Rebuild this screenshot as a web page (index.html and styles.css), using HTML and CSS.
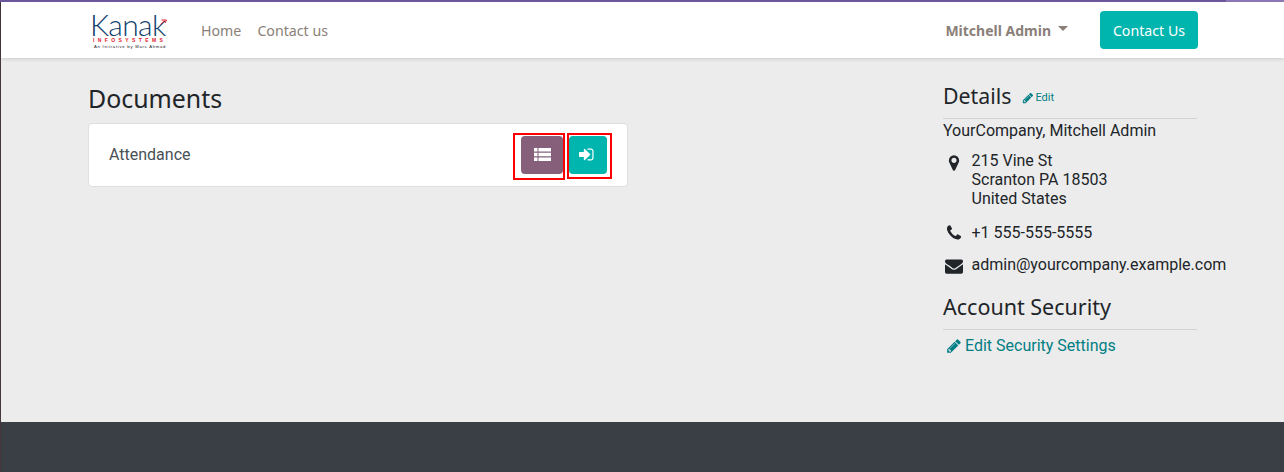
FILE: index.html
```html
<!DOCTYPE html>
<html lang="en">
<head>
<meta charset="utf-8">
<title>Documents</title>
<link rel="stylesheet" href="styles.css">
</head>
<body>
<div class="page">
  <div class="topline"></div>
  <header class="navbar">
    <div class="brand">
      <div class="brand-name">Kanak<svg class="brand-arrow" viewBox="0 0 7 6" width="7" height="6"><path d="M.5 5.500 5 1.500M1.500 1h5L5 4" fill="none" stroke="#e0202c" stroke-width="1"/></svg></div>
      <div class="brand-sub">INFOSYSTEMS</div>
      <div class="brand-tag">An Initiative by Mars Ahmad</div>
    </div>
    <nav class="nav-links">
      <a class="nav-link">Home</a>
      <a class="nav-link">Contact us</a>
    </nav>
    <div class="nav-right">
      <span class="user">Mitchell Admin</span>
      <span class="caret"></span>
      <a class="contact-btn">Contact Us</a>
    </div>
  </header>
  <main class="content">
    <section class="docs">
      <h1 class="docs-title">Documents</h1>
      <div class="card">
        <span class="card-label">Attendance</span>
        <div class="card-actions">
          <span class="outline outline-list">
            <span class="action action-list">
              <svg viewBox="0 0 17 13" width="17" height="13"><path fill="#fff" d="M0 0h3.500v3.400H0zM4.500 0H17v3.400H4.500zM0 4.800h3.500v3.400H0zM4.500 4.800H17v3.400H4.500zM0 9.600h3.500V13H0zM4.500 9.600H17V13H4.500z"/></svg>
            </span>
          </span>
          <span class="outline outline-sign">
            <span class="action action-sign">
              <svg viewBox="0 0 1792 1792" width="17" height="17"><path fill="#fff" d="M1184 896q0 26-19 45l-544 544q-19 19-45 19t-45-19-19-45v-288h-448q-26 0-45-19t-19-45v-384q0-26 19-45t45-19h448v-288q0-26 19-45t45-19 45 19l544 544q19 19 19 45zm352-352v704q0 119-84.500 203.500t-203.500 84.500h-320q-13 0-22.500-9.500t-9.500-22.500q0-4-1-20t-.5-26.500 3-23.500 10-19.500 20.500-6.500h320q66 0 113-47t47-113v-704q0-66-47-113t-113-47h-312l-11.500-1-11.500-3-8-5.500-7-9-2-13.500q0-4-1-20t-.5-26.500 3-23.500 10-19.500 20.500-6.500h320q119 0 203.500 84.500t84.500 203.500z"/></svg>
            </span>
          </span>
        </div>
      </div>
    </section>
    <aside class="side">
      <div class="side-head">
        <h2 class="side-title">Details</h2>
        <a class="edit-link"><svg class="pencil" viewBox="0 0 1792 1792" width="12" height="12"><path fill="currentColor" d="M491 1536l91-91-235-235-91 91v107h128v128h107zm523-928q0-22-22-22-10 0-17 7l-542 542q-7 7-7 17 0 22 22 22 10 0 17-7l542-542q7-7 7-17zm-54-192l416 416-832 832h-416v-416zm683 96q0 53-37 90l-166 166-416-416 166-165q36-38 90-38 53 0 91 38l235 234q37 39 37 91z"/></svg>Edit</a>
      </div>
      <div class="company">YourCompany, Mitchell Admin</div>
      <div class="info-row info-address">
        <svg class="info-icon" viewBox="0 0 1792 1792" width="18" height="18"><path fill="#212529" d="M1152 640q0-106-75-181t-181-75-181 75-75 181 75 181 181 75 181-75 75-181zm256 0q0 109-33 179l-364 774q-16 33-47.500 52t-67.500 19-67.500-19-46.500-52l-365-774q-33-70-33-179 0-212 150-362t362-150 362 150 150 362z"/></svg>
        <span class="info-text">215 Vine St<br>Scranton PA 18503<br>United States</span>
      </div>
      <div class="info-row info-phone">
        <svg class="info-icon" viewBox="0 0 1792 1792" width="18" height="18"><path fill="#212529" d="M1600 1240q0 27-10 70.500t-21 68.500q-21 50-122 106-94 51-186 51-27 0-53-3.500t-57.500-12.500-47-14.500-55.500-20.500-49-18q-98-35-175-83-127-79-264-216t-216-264q-48-77-83-175-3-9-18-49t-20.500-55.500-14.500-47-12.500-57.500-3.500-53q0-92 51-186 56-101 106-122 25-11 68.500-21t70.500-10q14 0 21 3 18 6 53 76 11 19 30 54t35 63.500 31 53.500q3 4 17.500 25t21.500 35.500 7 28.500q0 20-28.500 50t-62 55-62 53-28.500 46q0 9 5 22.500t8.500 20.500 14 24 11.500 19q76 137 174 235t235 174q2 1 19 11.500t24 14 20.500 8.500 22.500 5q18 0 46-28.500t53-62 55-62 50-28.500q14 0 28.500 7t35.500 21.500 25 17.500q25 15 53.500 31t63.500 35 54 30q70 35 76 53 3 7 3 21z"/></svg>
        <span class="info-text">+1 555-555-5555</span>
      </div>
      <div class="info-row info-mail">
        <svg class="info-icon" viewBox="0 0 1792 1792" width="18" height="18"><path fill="#212529" d="M1792 710v794q0 66-47 113t-113 47h-1472q-66 0-113-47t-47-113v-794q44 49 101 87 362 246 497 345 57 42 92.500 65.500t94.500 48 110 24.500h2q51 0 110-24.500t94.500-48 92.500-65.500q170-123 498-345 57-39 100-87zm0-294q0 79-49 151t-122 123q-376 261-468 325-10 7-42.500 30.500t-54 38-52 32.500-57.500 27-50 9h-2q-23 0-50-9t-57.500-27-52-32.500-54-38-42.500-30.500q-91-64-262-182.500t-205-142.500q-62-42-117-115.500t-55-136.500q0-78 41.500-130t118.500-52h1472q65 0 112.500 47t47.500 113z"/></svg>
        <span class="info-text">admin@yourcompany.example.com</span>
      </div>
      <h2 class="side-title security-title">Account Security</h2>
      <a class="security-link"><svg class="pencil-lg" viewBox="0 0 1792 1792" width="16" height="16"><path fill="currentColor" d="M491 1536l91-91-235-235-91 91v107h128v128h107zm523-928q0-22-22-22-10 0-17 7l-542 542q-7 7-7 17 0 22 22 22 10 0 17-7l542-542q7-7 7-17zm-54-192l416 416-832 832h-416v-416zm683 96q0 53-37 90l-166 166-416-416 166-165q36-38 90-38 53 0 91 38l235 234q37 39 37 91z"/></svg>Edit Security Settings</a>
    </aside>
  </main>
  <footer class="footer"></footer>
</div>
</body>
</html>
```
FILE: styles.css
```css
* { box-sizing: border-box; }
html, body { margin: 0; padding: 0; height: 100%; overflow: hidden; }
body { background: #ececec; font-family: Roboto, sans-serif; color: #212529; font-size: 16px; }
.page { height: 472px; display: flex; flex-direction: column; border-left: 1px solid #46363e; }
.topline { height: 2px; flex: none; margin-left: -1px; background: linear-gradient(to right, #6a5699 1226px, #8b78b4 1226px); position: relative; z-index: 1; }
.navbar {
  height: 56px; flex: none; background: #fff;
  display: flex; align-items: center; padding: 0 86px 0 89px;
  box-shadow: 0 1px 4px rgba(0,0,0,.14); position: relative;
}
.brand { width: 78px; color: #12406b; }
.brand-name { font: 300 30px/24px Lato, sans-serif; letter-spacing: -.6px; height: 24px; position: relative; }
.brand-arrow { position: absolute; left: 70px; top: 7px; }
.brand-sub { font: 700 5px/5px "Liberation Sans", sans-serif; color: #e0202c; letter-spacing: 3.400px; margin: 2px 0 0 3px; white-space: nowrap; }
.brand-tag { font: 4.200px/5px "Liberation Sans", sans-serif; color: #222; letter-spacing: .75px; white-space: nowrap; margin: 1px 0 0 4px; }
.nav-links { display: flex; gap: 16px; margin-left: 33px; margin-top: 1px; }
.nav-link { font: 14.200px/20px "Noto Sans", sans-serif; color: #8a8079; }
.nav-right { margin-left: auto; display: flex; align-items: center; }
.user { font: 700 14px/20px "Noto Sans", sans-serif; color: #8a8079; margin: 1px 0 0 0; }
.caret { width: 0; height: 0; border: 5px solid transparent; border-top-color: #8a8079; border-bottom: 0; margin: 0 0 3px 7px; }
.contact-btn {
  margin-left: 32px; width: 98px; height: 38px; background: #00b5ad; color: #fff; border-radius: 4px;
  font: 14.200px/39px "Noto Sans", sans-serif; text-align: center;
}
.content { flex: 1; display: flex; padding-left: 87px; }
.docs { width: 540px; }
.docs-title { font: 400 24.900px/32px "Noto Sans", sans-serif; margin: 24px 0 9px; color: #212529; }
.card {
  height: 64px; background: #fff; border: 1px solid #dfdfdf; border-radius: 4px;
  display: flex; align-items: center; justify-content: space-between; padding: 0 15px 0 20px;
}
.card-label { font: 16px/24px Roboto, sans-serif; color: #495057; }
.card-actions { display: flex; margin-top: 2px; }
.outline { border: 2px solid #f00; display: flex; }
.outline-list { width: 52px; height: 47px; padding: 1px 0 0 6px; }
.outline-sign { width: 45px; height: 46px; margin-left: 2px; padding-top: 1px; }
.action { height: 38px; display: flex; align-items: center; justify-content: center; border-radius: 4px; }
.action-list { width: 42px; background: #86607a; }
.action-sign { width: 38px; background: #00b5ad; }
.action-sign svg { margin-left: -2px; }
.side { margin-left: 315px; width: 254px; flex: none; }
.side-head { height: 61px; border-bottom: 1px solid #d2d2d2; display: flex; align-items: flex-start; padding-top: 22px; }
.side-title { font: 400 21.300px/32px "Noto Sans", sans-serif; margin: 0; color: #212529; }
.edit-link { font: 11px/16px Roboto, sans-serif; color: #017e84; margin: 10px 0 0 11px; display: inline-flex; align-items: center; gap: 1px; }
.pencil { flex: none; }
.company { line-height: 24px; white-space: nowrap; }
.info-row { display: flex; white-space: nowrap; line-height: 19px; }
.info-icon { flex: none; margin-left: 1.500px; margin-right: 9px; }
.info-address { margin-top: 8px; }
.info-address .info-icon { margin-top: 3px; }
.info-phone { margin-top: 15px; }
.info-phone .info-icon { margin-top: 1px; }
.info-mail { margin-top: 13px; }
.info-mail .info-icon { margin-top: 2px; }
.security-title { margin-top: 16px; padding-bottom: 6px; border-bottom: 1px solid #d2d2d2; width: 254px; font-size: 21.500px; }
.security-link { display: flex; align-items: center; line-height: 24px; color: #017e84; margin-top: 4px; padding-left: 3px; white-space: nowrap; }
.pencil-lg { margin-right: 3px; flex: none; }
.footer { height: 50px; flex: none; background: #3a3f46; }
```
